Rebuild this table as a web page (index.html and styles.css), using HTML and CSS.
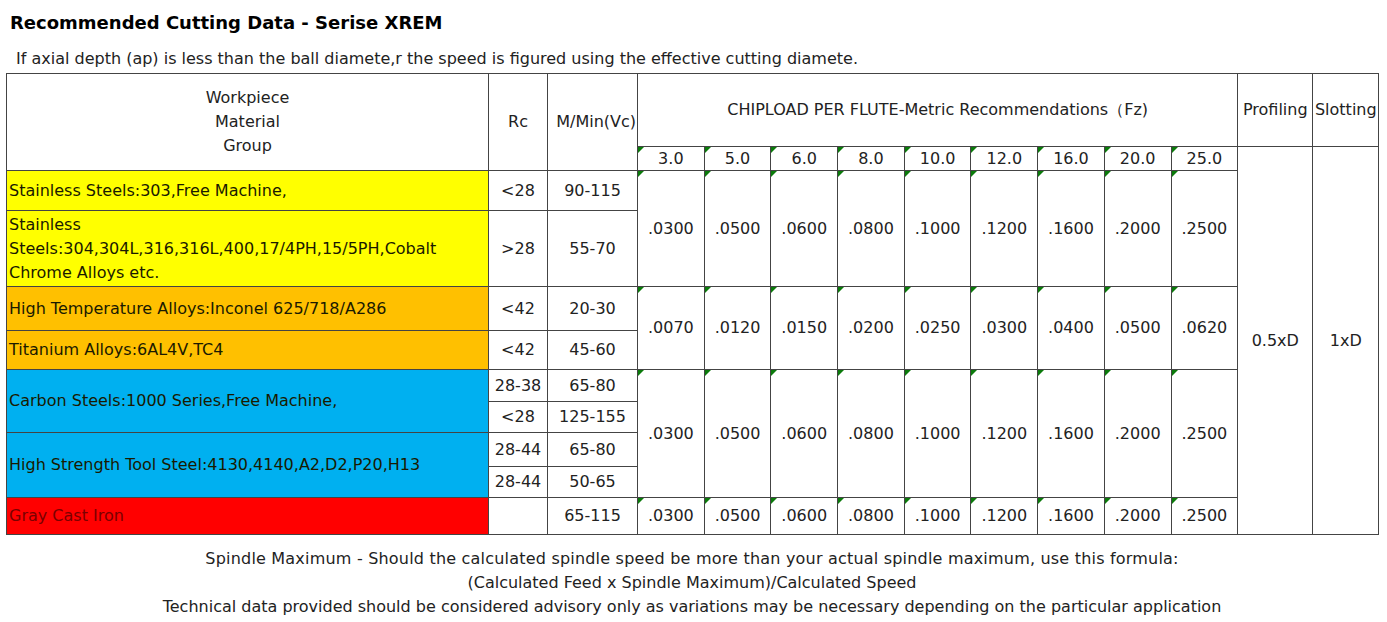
FILE: index.html
```html
<!DOCTYPE html>
<html>
<head>
<meta charset="utf-8">
<link rel="stylesheet" href="styles.css">
</head>
<body>
<div class="page">
  <h1 class="title">Recommended Cutting Data - Serise XREM</h1>
  <p class="note">If axial depth (ap) is less than the ball diamete,r the speed is figured using the effective cutting diamete.</p>
  <table class="data">
    <colgroup>
      <col class="c-mat"><col class="c-rc"><col class="c-vc">
      <col class="c-fz"><col class="c-fz"><col class="c-fz"><col class="c-fz"><col class="c-fz"><col class="c-fz"><col class="c-fz"><col class="c-fz"><col class="c-fz">
      <col class="c-pr"><col class="c-sl">
    </colgroup>
    <tbody>
      <tr class="h-h1">
        <th rowspan="2" class="hd">Workpiece<br>Material<br>Group</th>
        <th rowspan="2" class="hd">Rc</th>
        <th rowspan="2" class="hd vc">M/Min(Vc)</th>
        <th colspan="9" class="hd chip">CHIPLOAD PER FLUTE-Metric Recommendations（Fz)</th>
        <th class="hd">Profiling</th>
        <th class="hd">Slotting</th>
      </tr>
      <tr class="h-h2">
        <td class="sz tri">3.0</td><td class="sz tri">5.0</td><td class="sz tri">6.0</td><td class="sz tri">8.0</td><td class="sz tri">10.0</td><td class="sz tri">12.0</td><td class="sz tri">16.0</td><td class="sz tri">20.0</td><td class="sz tri">25.0</td>
        <td rowspan="10" class="num">0.5xD</td>
        <td rowspan="10" class="num">1xD</td>
      </tr>
      <tr class="h-r1">
        <td class="mat yellow">Stainless Steels:303,Free Machine,</td>
        <td class="num">&lt;28</td><td class="num">90-115</td>
        <td rowspan="2" class="num tri">.0300</td><td rowspan="2" class="num tri">.0500</td><td rowspan="2" class="num tri">.0600</td><td rowspan="2" class="num tri">.0800</td><td rowspan="2" class="num tri">.1000</td><td rowspan="2" class="num tri">.1200</td><td rowspan="2" class="num tri">.1600</td><td rowspan="2" class="num tri">.2000</td><td rowspan="2" class="num tri">.2500</td>
      </tr>
      <tr class="h-r2">
        <td class="mat yellow">Stainless<br>Steels:304,304L,316,316L,400,17/4PH,15/5PH,Cobalt<br>Chrome Alloys etc.</td>
        <td class="num">&gt;28</td><td class="num">55-70</td>
      </tr>
      <tr class="h-r3">
        <td class="mat orange">High Temperature Alloys:Inconel 625/718/A286</td>
        <td class="num">&lt;42</td><td class="num">20-30</td>
        <td rowspan="2" class="num tri">.0070</td><td rowspan="2" class="num tri">.0120</td><td rowspan="2" class="num tri">.0150</td><td rowspan="2" class="num tri">.0200</td><td rowspan="2" class="num tri">.0250</td><td rowspan="2" class="num tri">.0300</td><td rowspan="2" class="num tri">.0400</td><td rowspan="2" class="num tri">.0500</td><td rowspan="2" class="num tri">.0620</td>
      </tr>
      <tr class="h-r4">
        <td class="mat orange">Titanium Alloys:6AL4V,TC4</td>
        <td class="num">&lt;42</td><td class="num">45-60</td>
      </tr>
      <tr class="h-r5a">
        <td rowspan="2" class="mat blue">Carbon Steels:1000 Series,Free Machine,</td>
        <td class="num">28-38</td><td class="num">65-80</td>
        <td rowspan="4" class="num tri">.0300</td><td rowspan="4" class="num tri">.0500</td><td rowspan="4" class="num tri">.0600</td><td rowspan="4" class="num tri">.0800</td><td rowspan="4" class="num tri">.1000</td><td rowspan="4" class="num tri">.1200</td><td rowspan="4" class="num tri">.1600</td><td rowspan="4" class="num tri">.2000</td><td rowspan="4" class="num tri">.2500</td>
      </tr>
      <tr class="h-r5b">
        <td class="num">&lt;28</td><td class="num">125-155</td>
      </tr>
      <tr class="h-r6a">
        <td rowspan="2" class="mat blue">High Strength Tool Steel:4130,4140,A2,D2,P20,H13</td>
        <td class="num">28-44</td><td class="num">65-80</td>
      </tr>
      <tr class="h-r6b">
        <td class="num">28-44</td><td class="num">50-65</td>
      </tr>
      <tr class="h-r7">
        <td class="mat red">Gray Cast Iron</td>
        <td class="num"></td><td class="num">65-115</td>
        <td class="num tri">.0300</td><td class="num tri">.0500</td><td class="num tri">.0600</td><td class="num tri">.0800</td><td class="num tri">.1000</td><td class="num tri">.1200</td><td class="num tri">.1600</td><td class="num tri">.2000</td><td class="num tri">.2500</td>
      </tr>
    </tbody>
  </table>
  <div class="footer">
    <p>Spindle Maximum - Should the calculated spindle speed be more than your actual spindle maximum, use this formula:</p>
    <p>(Calculated Feed x Spindle Maximum)/Calculated Speed</p>
    <p>Technical data provided should be considered advisory only as variations may be necessary depending on the particular application</p>
  </div>
</div>
</body>
</html>
```

FILE: styles.css
```css
html, body {
  margin: 0;
  padding: 0;
  background: #ffffff;
}

.page {
  width: 1372px;
  padding: 0 0 0 6px;
  font-family: "DejaVu Sans", Verdana, sans-serif;
  color: #1a1a1a;
}

.title {
  margin: 0;
  padding: 11px 0 0 4px;
  font-size: 18px;
  line-height: 24px;
  font-weight: bold;
  color: #000;
}

.note {
  margin: 0;
  padding: 14px 0 0 10px;
  font-size: 16px;
  line-height: 20px;
  color: #222;
}

.data {
  margin-top: 4px;
  width: 1372px;
  table-layout: fixed;
  border-collapse: collapse;
  font-size: 16px;
  border: 1px solid #333;
}

.c-mat { width: 482px; }
.c-rc { width: 59px; }
.c-vc { width: 90px; }
.c-fz { width: 66.7px; }
.c-pr { width: 75px; }
.c-sl { width: 66px; }

.data th, .data td {
  border: 1px solid #444;
  padding: 0;
  vertical-align: middle;
  text-align: center;
  font-weight: normal;
  color: #222;
  line-height: 24px;
  white-space: nowrap;
  overflow: hidden;
}

.h-h1 { height: 73px; }
.h-h2 { height: 24px; }
.h-r1 { height: 40px; }
.h-r2 { height: 76px; }
.h-r3 { height: 44px; }
.h-r4 { height: 39px; }
.h-r5a { height: 32px; }
.h-r5b { height: 31px; }
.h-r6a { height: 34px; }
.h-r6b { height: 31px; }
.h-r7 { height: 37px; }

.data .hd.vc { text-align: right; padding-right: 1px; }

.data .sz {
  line-height: 22px;
  vertical-align: bottom;
}

.data .mat {
  text-align: left;
  padding-left: 2px;
  line-height: 24px;
  color: #1a1a00;
}

.yellow { background: #ffff00; }
.orange { background: #ffc000; }
.blue { background: #00b0f0; }
.data .red { background: #ff0000; color: #7a0000; }

.tri { position: relative; }
.tri::before {
  content: "";
  position: absolute;
  top: 0;
  left: 0;
  width: 0;
  height: 0;
  border-top: 6px solid #0b7a0b;
  border-right: 6px solid transparent;
}

.data td.tri { vertical-align: middle; }
.data td.sz.tri { vertical-align: bottom; }

.footer {
  margin-top: 12px;
  text-align: center;
  font-size: 16px;
  line-height: 24px;
  color: #222;
}
.footer p { margin: 0; }
.footer p:first-child { letter-spacing: 0.2px; }
```
